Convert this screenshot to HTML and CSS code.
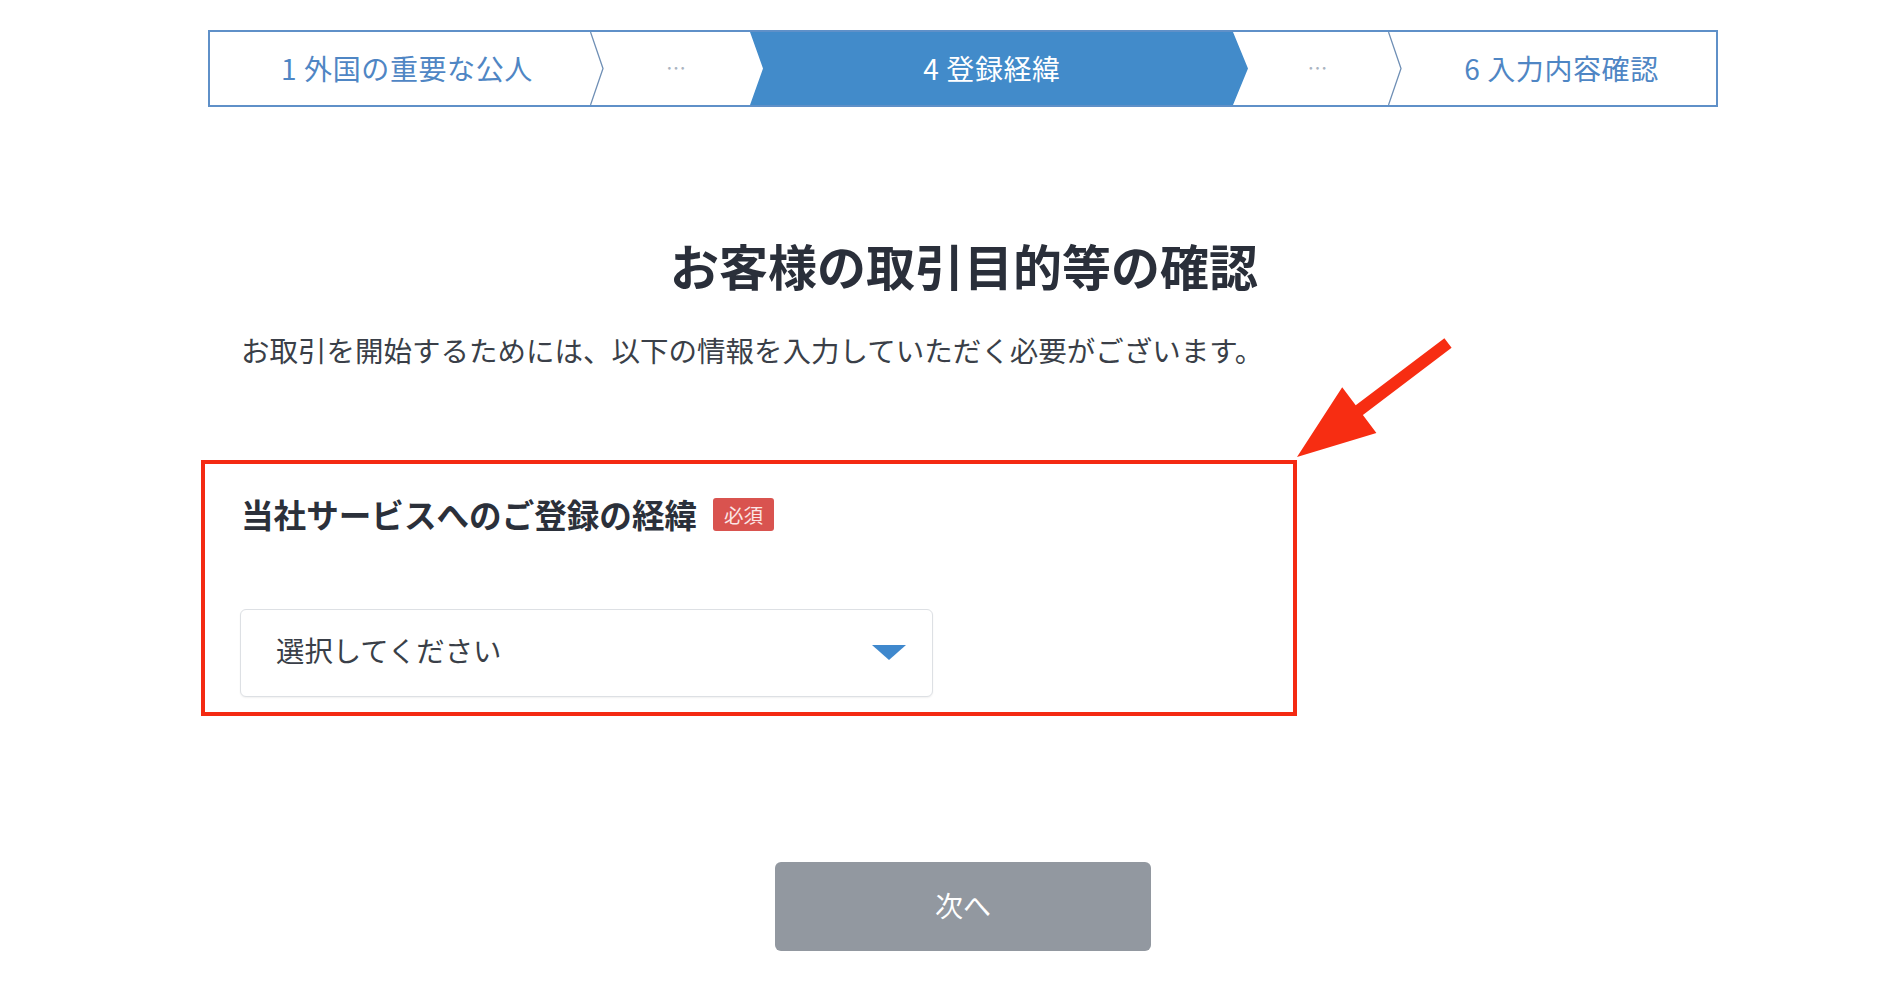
FILE: index.html
```html
<!DOCTYPE html>
<html lang="ja">
<head>
<meta charset="utf-8">
<title>お客様の取引目的等の確認</title>
<link rel="stylesheet" href="styles.css">
</head>
<body>
<div class="page">
  <ol class="stepper">
    <li class="step step-1">1 外国の重要な公人</li>
    <li class="chev"><svg viewBox="0 0 14 73" preserveAspectRatio="none"><polyline points="0.5,0 13,36.5 0.5,73" /></svg></li>
    <li class="step step-2 step-dots">…</li>
    <li class="step step-active">4 登録経緯</li>
    <li class="step step-4 step-dots">…</li>
    <li class="chev"><svg viewBox="0 0 14 73" preserveAspectRatio="none"><polyline points="0.5,0 13,36.5 0.5,73" /></svg></li>
    <li class="step step-5">6 入力内容確認</li>
  </ol>

  <h1 class="title">お客様の取引目的等の確認</h1>
  <p class="lead">お取引を開始するためには、以下の情報を入力していただく必要がございます。</p>

  <div class="field">
    <div class="field-label"><span class="field-name">当社サービスへのご登録の経緯</span><span class="badge">必須</span></div>
    <div class="select">
      <span class="select-text">選択してください</span>
      <svg class="select-caret" viewBox="0 0 34 15"><polygon points="0,0 34,0 17,15" /></svg>
    </div>
  </div>

  <div class="actions">
    <button class="btn-next" type="button">次へ</button>
  </div>

  <div class="annot-box"></div>
  <svg class="annot-arrow" viewBox="0 0 200 160">
    <polygon points="17,137 96.4,112.9 82.9,94.9 171.6,27.8 164.4,18.2 75.7,85.3 62.2,67.3" />
  </svg>
</div>
</body>
</html>
```

FILE: styles.css
```css
* { box-sizing: border-box; }
html, body {
  margin: 0;
  padding: 0;
  background: #ffffff;
}
body {
  font-family: "Noto Sans CJK JP", "Noto Sans", sans-serif;
  color: #333a45;
}
.page {
  position: relative;
  width: 1900px;
  height: 997px;
  padding: 30px 182px 0 208px;
}

/* stepper */
.stepper {
  list-style: none;
  margin: 0;
  padding: 0;
  display: flex;
  height: 77px;
  border: 2px solid #5f90c8;
  overflow: hidden;
}
.step {
  display: flex;
  align-items: center;
  justify-content: center;
  font-size: 28px;
  letter-spacing: 0.6px;
  color: #4f86c4;
  white-space: nowrap;
  height: 100%;
  padding-bottom: 2px;
}
.step-1 { flex: 0 0 380px; padding-left: 14px; }
.step-2 { flex: 0 0 160px; padding-left: 13px; }
.step-active {
  flex: 0 0 498px;
  margin-right: -15px;
  padding: 0 27px 2px 13px;
  background: #428bca;
  color: #ffffff;
  clip-path: polygon(0 0, 483px 0, 498px 50%, 483px 100%, 0 100%, 13px 50%);
  position: relative;
}
.step-4 { flex: 0 0 155px; padding-left: 15px; }
.step-5 { flex: 0 0 328px; padding-left: 19px; }
.step-dots {
  font-size: 20px;
  color: #aab4c1;
  letter-spacing: 1px;
}
.chev {
  flex: 0 0 14px;
  margin-right: -14px;
  height: 100%;
  position: relative;
  z-index: 1;
}
.chev svg {
  display: block;
  width: 14px;
  height: 100%;
}
.chev polyline {
  fill: none;
  stroke: #6f8fb5;
  stroke-width: 1.3;
  vector-effect: non-scaling-stroke;
}

/* heading */
.title {
  margin: 128px 0 0;
  padding-left: 2px;
  font-size: 49px;
  line-height: 60px;
  font-weight: 700;
  text-align: center;
  color: #2a2f3a;
}
.lead {
  margin: 35px 0 0;
  padding-left: 33px;
  font-size: 28.5px;
  line-height: 40px;
  color: #3a3f48;
}

/* field */
.field {
  margin-top: 121.5px;
  padding-left: 32px;
}
.field-label {
  display: flex;
  align-items: center;
  gap: 16px;
  height: 44px;
  padding-left: 1px;
}
.field-name {
  font-size: 32.6px;
  line-height: 44px;
  font-weight: 700;
  color: #2b303a;
}
.badge {
  display: inline-block;
  height: 33px;
  line-height: 33px;
  padding: 0 11px;
  font-size: 19.5px;
  background: #d9534f;
  color: #fbe6e6;
  border-radius: 3px;
  margin-top: 2px;
}
.select {
  margin-top: 73px;
  width: 693px;
  height: 88px;
  display: flex;
  align-items: center;
  justify-content: space-between;
  padding: 0 26px 0 35px;
  border: 1px solid #dde0e4;
  border-radius: 6px;
  box-shadow: 0 1px 2px rgba(0, 0, 0, 0.06);
  background: #ffffff;
}
.select-text {
  font-size: 28.4px;
  line-height: 40px;
  color: #3a3f48;
  margin-bottom: 6px;
}
.select-caret {
  width: 34px;
  height: 15px;
  display: block;
}
.select-caret polygon { fill: #3f88cd; }

/* action */
.actions {
  margin-top: 165px;
  display: flex;
  justify-content: center;
}
.btn-next {
  width: 376px;
  height: 89px;
  border: none;
  border-radius: 6px;
  background: #9298a0;
  color: #ffffff;
  font-family: "Noto Sans CJK JP", "Noto Sans", sans-serif;
  font-size: 28px;
  padding-bottom: 4px;
}

/* annotations */
.annot-box {
  position: absolute;
  left: 201px;
  top: 460px;
  width: 1096px;
  height: 256px;
  border: 4px solid #f42a12;
}
.annot-arrow {
  position: absolute;
  left: 1280px;
  top: 320px;
  width: 200px;
  height: 160px;
}
.annot-arrow polygon { fill: #f72d12; }
```
